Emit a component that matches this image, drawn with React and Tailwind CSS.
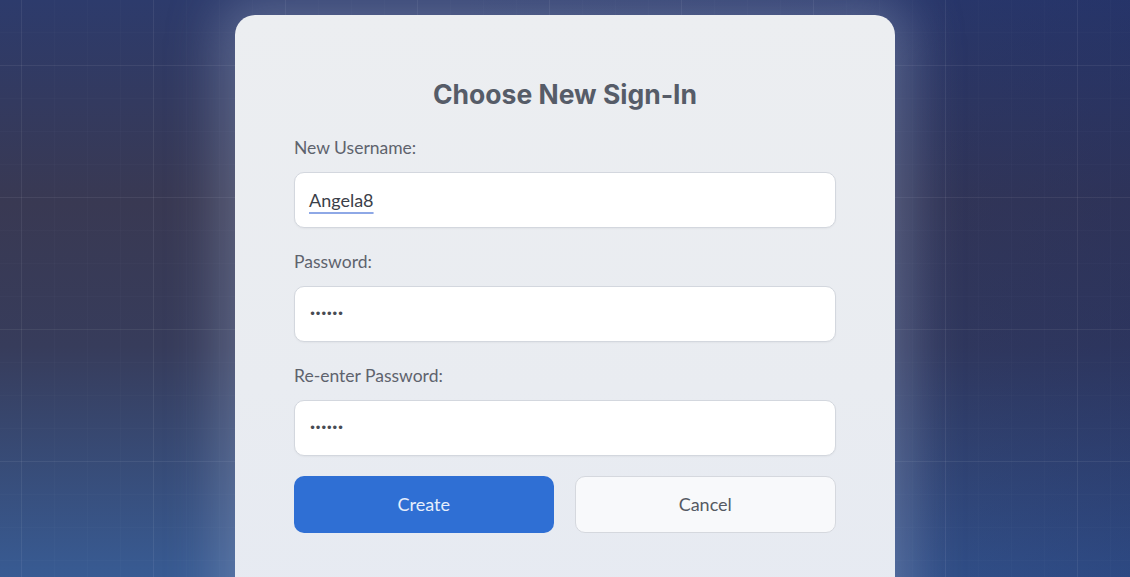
import React from "react";

function Field({ label, children }) {
  return (
    <div className="flex flex-col">
      <label className="text-[17.5px] leading-6 text-[#5e636d] font-['Lato','Noto_Sans',sans-serif]">{label}</label>
      <div className="mt-3 h-14 rounded-[10px] border border-[#d3d7de] bg-white flex items-center px-[14px] shadow-[0_1px_2px_rgba(0,0,0,0.04)]">
        {children}
      </div>
    </div>
  );
}

export default function App() {
  return (
    <div className="relative h-[577px] w-full overflow-hidden bg-[linear-gradient(180deg,#2d3b6c_0%,#393953_35%,#373c5b_60%,#385b93_100%)]">
      {/* tint + grid overlays */}
      <div className="absolute inset-0 bg-[linear-gradient(90deg,rgba(20,30,90,0)_40%,rgba(25,40,100,0.35)_100%)]" />
      <div className="absolute inset-0 bg-[linear-gradient(rgba(255,255,255,0.05)_1px,transparent_1px),linear-gradient(90deg,rgba(255,255,255,0.05)_1px,transparent_1px)] bg-[size:132px_132px] bg-[position:21px_65px]" />
      <div className="absolute inset-0 bg-[linear-gradient(rgba(255,255,255,0.015)_1px,transparent_1px),linear-gradient(90deg,rgba(255,255,255,0.015)_1px,transparent_1px)] bg-[size:33px_33px] bg-[position:21px_65px]" />

      <div className="relative flex justify-center pt-[15px]">
        <div className="w-[660px] h-[620px] rounded-[20px] bg-[linear-gradient(180deg,#eceef1_0%,#e9ecf1_60%,#e6eaf2_100%)] shadow-[0_0_50px_18px_rgba(160,175,205,0.35)] px-[59px] pt-[62px]">
          <h1 className="text-center text-[26.5px] leading-[34px] font-bold text-[#565c68] font-['Inter',sans-serif]">
            Choose New Sign-In
          </h1>

          <div className="mt-[25px] flex flex-col gap-[22px]">
            <Field label="New Username:">
              <span className="text-[18px] text-[#3b4049] underline decoration-[#8ea8e6] decoration-2 underline-offset-[5px] font-['Lato','Noto_Sans',sans-serif]">
                Angela8
              </span>
            </Field>
            <Field label="Password:">
              <span className="text-[12px] tracking-[-1.5px] text-[#474b53] font-['DejaVu_Sans',sans-serif]">••••••</span>
            </Field>
            <Field label="Re-enter Password:">
              <span className="text-[12px] tracking-[-1.5px] text-[#474b53] font-['DejaVu_Sans',sans-serif]">••••••</span>
            </Field>
          </div>

          <div className="mt-5 flex gap-[21px]">
            <button className="flex-1 h-[57px] rounded-[10px] bg-[#2f6fd4] text-[18px] text-[#e6eefc] font-['Lato','Noto_Sans',sans-serif]">
              Create
            </button>
            <button className="flex-1 h-[57px] rounded-[10px] bg-[#f8f9fb] border border-[#d5d8de] text-[18px] text-[#555a63] font-['Lato','Noto_Sans',sans-serif]">
              Cancel
            </button>
          </div>
        </div>
      </div>
    </div>
  );
}
